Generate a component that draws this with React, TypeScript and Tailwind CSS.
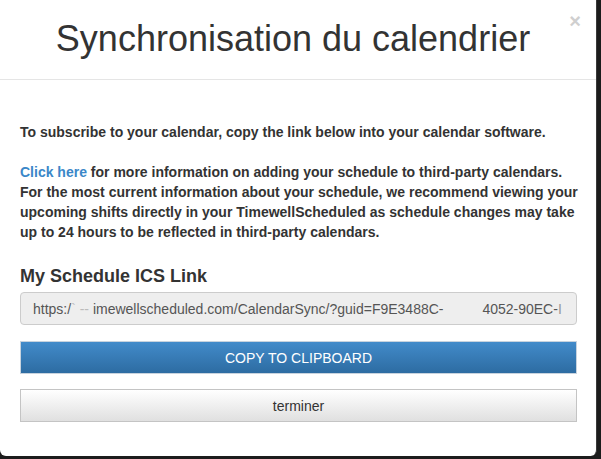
import React from "react";

const App = () => {
  return (
    <div className="w-[601px] h-[459px] bg-[#1c1c1c] overflow-hidden font-['Liberation_Sans',Arial,sans-serif]">
      <div className="w-[597px] h-[456px] bg-white rounded-b-[6px] border-r border-[#3a3a3a] flex flex-col">
        <header className="relative h-[80px] border-b border-[#e5e5e5] flex items-center justify-center pr-[10px] shrink-0">
          <h1 className="text-[36px] text-[#333] leading-none -mt-[2px]">Synchronisation du calendrier</h1>
          <span className="absolute right-[15px] top-[11px] text-[20px] font-bold text-[#cfcfcf] leading-none">×</span>
        </header>

        <div className="px-5 pt-[42px] text-[14px] leading-5 font-bold text-[#333] flex flex-col">
          <p className="whitespace-nowrap">To subscribe to your calendar, copy the link below into your calendar software.</p>
          <p className="mt-5 whitespace-nowrap">
            <a className="text-[#3a87c8]">Click here</a> for more information on adding your schedule to third-party calendars.
            <br />
            For the most current information about your schedule, we recommend viewing your
            <br />
            upcoming shifts directly in your TimewellScheduled as schedule changes may take
            <br />
            up to 24 hours to be reflected in third-party calendars.
          </p>

          <h2 className="mt-[24px] text-[18px] leading-5 text-[#333]">My Schedule ICS Link</h2>
          <div className="mt-[6px] h-[33px] w-[557px] rounded-[4px] border border-[#ccc] bg-[#eee] px-3 flex items-center text-[14px] font-normal text-[#555] whitespace-pre overflow-hidden">
            https:/<span className="text-[#bbb]">` -- </span>imewellscheduled.com/CalendarSync/?guid=F9E3488C-<span className="text-[#ddd]">          </span>4052-90EC-<span className="text-[#999]">I</span>
          </div>

          <button className="mt-[16px] h-[33px] w-[557px] border border-[#c8d3de] bg-gradient-to-b from-[#428bca] to-[#2d6ca2] text-white text-[14px] font-normal uppercase">
            Copy to clipboard
          </button>
          <button className="mt-[15px] h-[33px] w-[557px] border border-[#c4c4c4] bg-gradient-to-b from-white to-[#e0e0e0] text-[#333] text-[14px] font-normal">
            terminer
          </button>
        </div>
      </div>
    </div>
  );
};

export default App;
